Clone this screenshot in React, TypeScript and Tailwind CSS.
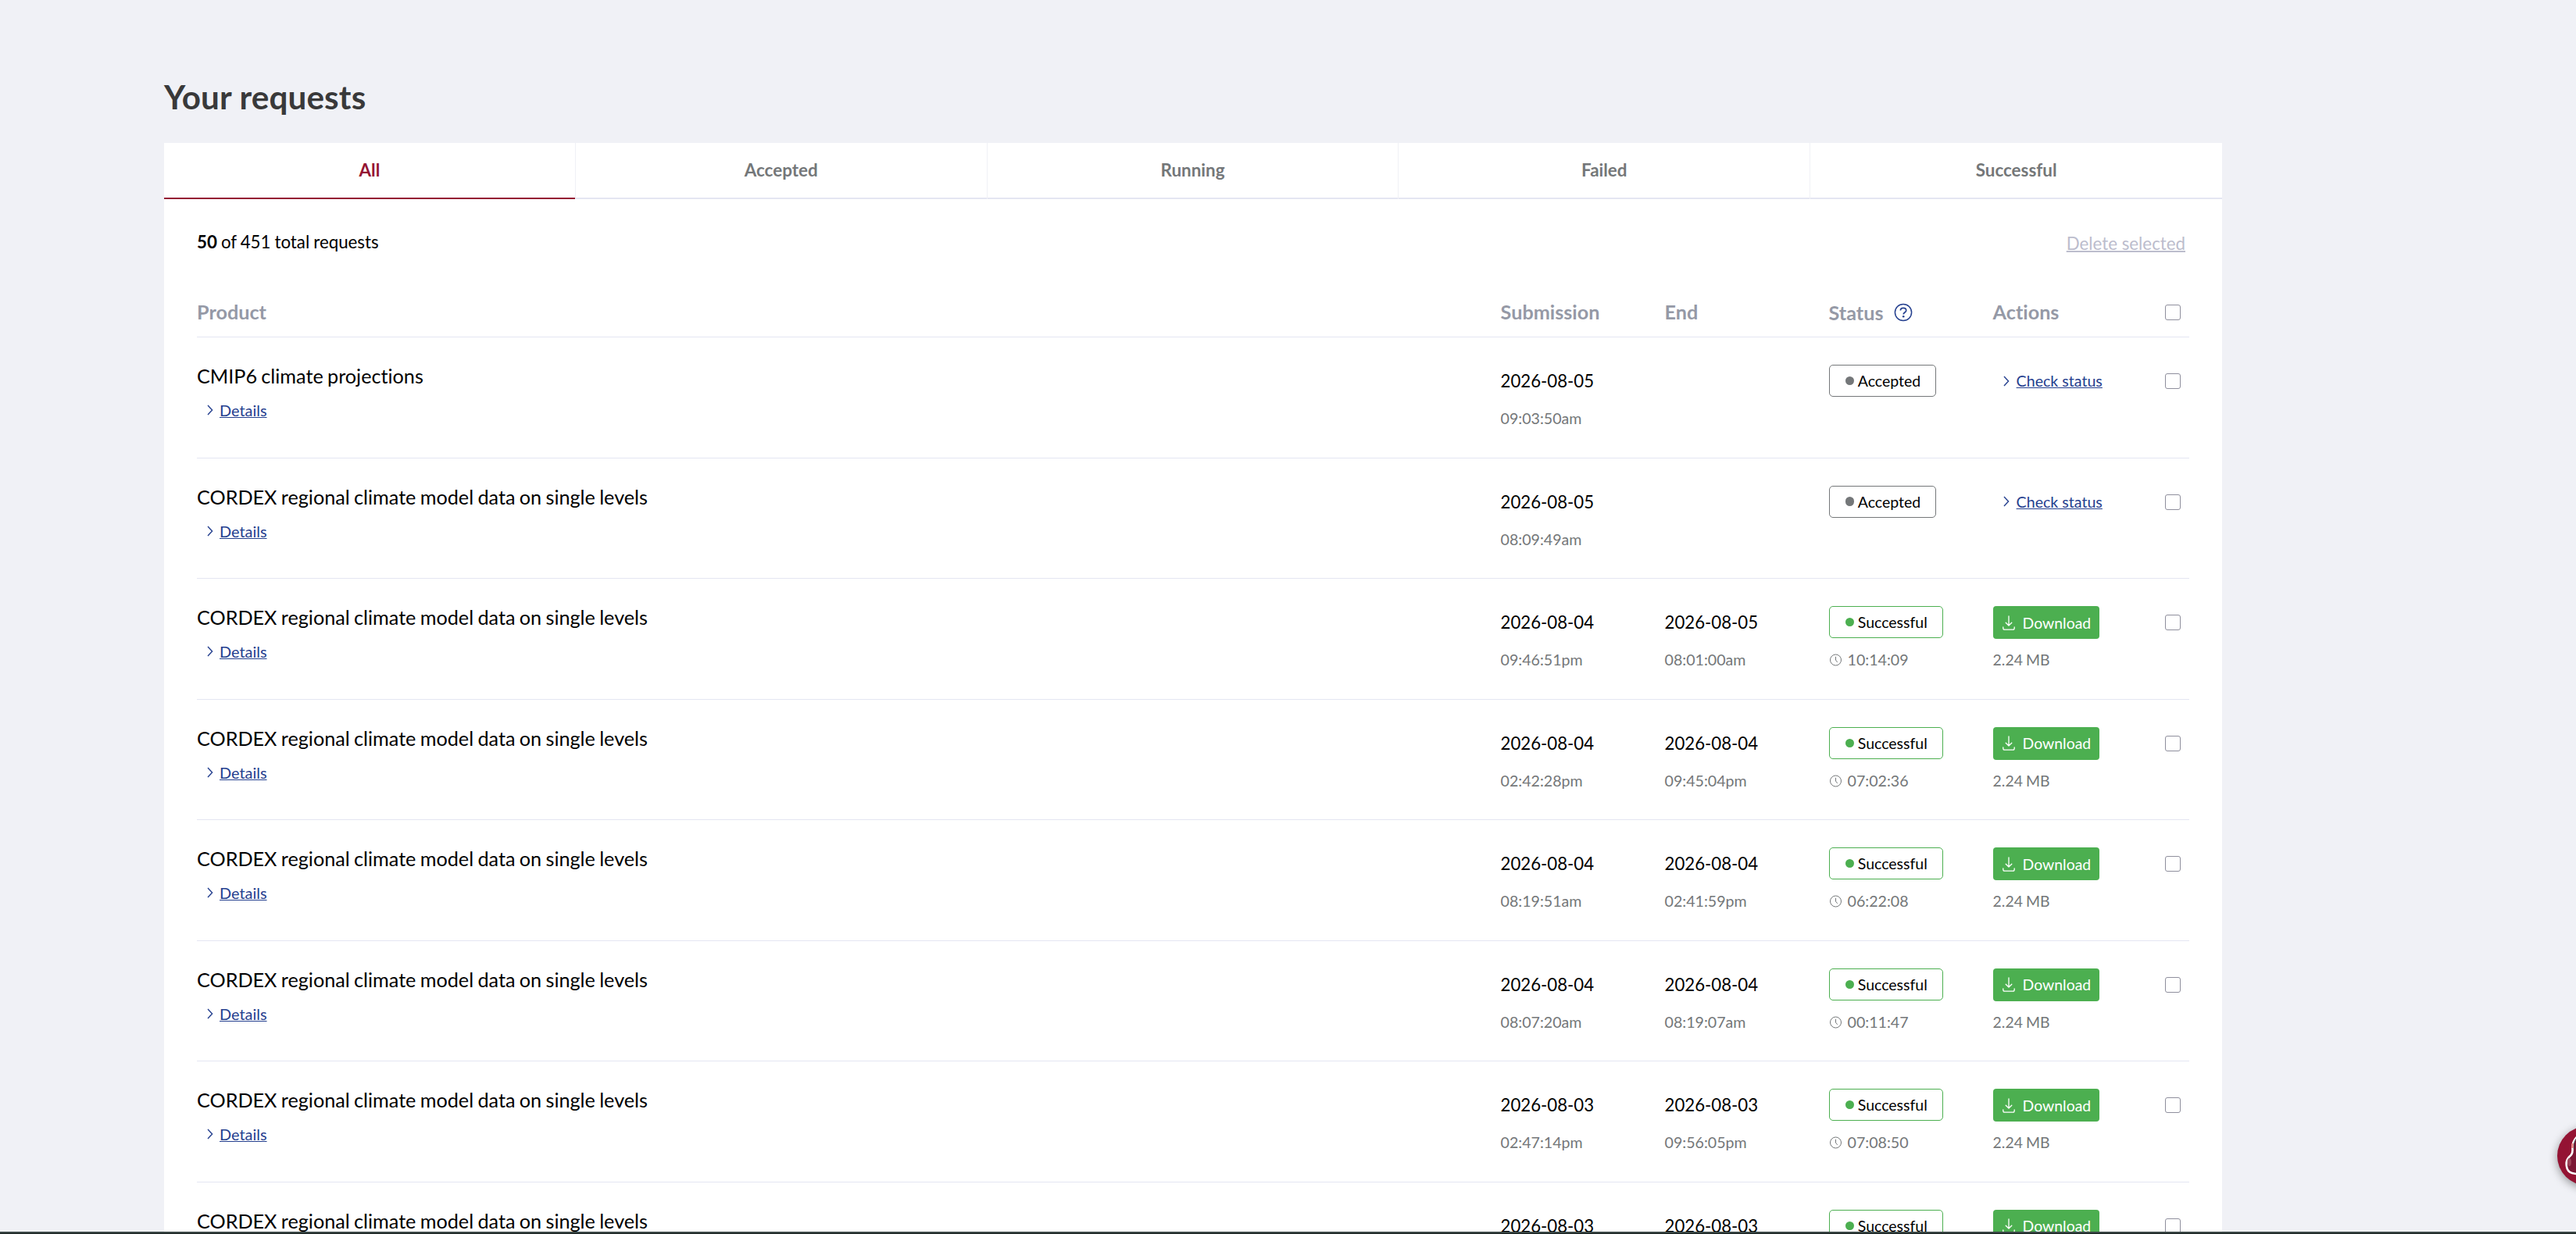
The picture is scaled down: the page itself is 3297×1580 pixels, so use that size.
type Request = {
  product: string;
  submitted: [string, string];
  ended?: [string, string];
  duration?: string;
};

const CORDEX = "CORDEX regional climate model data on single levels";

const requests: Request[] = [
  { product: "CMIP6 climate projections", submitted: ["2026-08-05", "09:03:50am"] },
  { product: CORDEX, submitted: ["2026-08-05", "08:09:49am"] },
  { product: CORDEX, submitted: ["2026-08-04", "09:46:51pm"], ended: ["2026-08-05", "08:01:00am"], duration: "10:14:09" },
  { product: CORDEX, submitted: ["2026-08-04", "02:42:28pm"], ended: ["2026-08-04", "09:45:04pm"], duration: "07:02:36" },
  { product: CORDEX, submitted: ["2026-08-04", "08:19:51am"], ended: ["2026-08-04", "02:41:59pm"], duration: "06:22:08" },
  { product: CORDEX, submitted: ["2026-08-04", "08:07:20am"], ended: ["2026-08-04", "08:19:07am"], duration: "00:11:47" },
  { product: CORDEX, submitted: ["2026-08-03", "02:47:14pm"], ended: ["2026-08-03", "09:56:05pm"], duration: "07:08:50" },
  { product: CORDEX, submitted: ["2026-08-03", ""], ended: ["2026-08-03", ""], duration: " " },
];

const tabs = ["All", "Accepted", "Running", "Failed", "Successful"];

function Chevron() {
  return (
    <svg className="h-[14px] w-[8px] shrink-0" viewBox="0 0 8 14" fill="none" stroke="#25408f" strokeWidth="1.4">
      <path d="M1 1l5.6 6L1 13" />
    </svg>
  );
}

function HelpIcon() {
  return (
    <svg className="h-6 w-6" viewBox="0 0 24 24" fill="none" stroke="#25408f" strokeWidth="1.5">
      <circle cx="12" cy="12" r="10.6" />
      <path d="M8.4 9.6c0-2 1.6-3.3 3.7-3.3s3.6 1.3 3.6 3.1c0 2.5-3.5 2.6-3.5 5" strokeWidth="1.7" />
      <circle cx="12.2" cy="17.2" r="1.3" fill="#25408f" stroke="none" />
    </svg>
  );
}

function ClockIcon() {
  return (
    <svg className="h-4 w-4 shrink-0" viewBox="0 0 16 16" fill="none" stroke="#747779" strokeWidth="1">
      <circle cx="8.5" cy="8" r="7" />
      <path d="M8.5 3.8v4.4l2.2 2.6" />
    </svg>
  );
}

function DownloadIcon() {
  return (
    <svg className="h-[19px] w-4 shrink-0" viewBox="0 0 16 19" fill="none" stroke="white" strokeWidth="1.3" strokeLinecap="round" strokeLinejoin="round">
      <path d="M8 .8v12M4.2 9.2L8 13l3.8-3.8M.8 14.8v1.4c0 1.2.7 1.9 1.9 1.9h10.6c1.2 0 1.9-.7 1.9-1.9v-1.4" />
    </svg>
  );
}

function Checkbox() {
  return <span className="block h-5 w-5 rounded-[3px] border border-[#8f8f9d] bg-white" />;
}

function DateCell({ value }: { value?: [string, string] }) {
  return (
    <div className="pt-[35px]">
      {value && (
        <>
          <div className="text-[22.2px] leading-[42px]">{value[0]}</div>
          <div className="mt-[13px] text-[19.6px] leading-[28px] text-[#747779]">{value[1]}</div>
        </>
      )}
    </div>
  );
}

function StatusBadge({ done }: { done: boolean }) {
  return (
    <div
      className={
        "flex h-[41px] w-fit items-center rounded-[5px] border pr-[19px] pl-[20px] text-[19.5px] leading-[23px] " +
        (done ? "border-[#4caf50]" : "border-[#747779]")
      }
    >
      <span className={"mr-[5px] size-[11.2px] rounded-full " + (done ? "bg-[#4caf50]" : "bg-[#747779]")} />
      {done ? "Successful" : "Accepted"}
    </div>
  );
}

function RequestRow({ request }: { request: Request }) {
  const done = Boolean(request.duration);
  return (
    <div className="grid h-[154.57px] grid-cols-[1fr_210px_210px_210px_210px_41.4px] border-b border-[#e4e6f2]">
      <div className="pt-[33px]">
        <div className="text-[25.2px] leading-[32px] [word-spacing:-1.1px]">{request.product}</div>
        <div className="mt-[14px] flex items-center pl-[13px] text-[19.9px] leading-[28px] text-[#25408f]">
          <Chevron />
          <span className="ml-2 underline underline-offset-[1px]">Details</span>
        </div>
      </div>
      <DateCell value={request.submitted} />
      <DateCell value={request.ended} />
      <div className="pt-[35px]">
        <StatusBadge done={done} />
        {request.duration?.trim() && (
          <div className="mt-[14px] flex items-center text-[19.6px] leading-[28px] text-[#747779]">
            <ClockIcon />
            <span className="ml-2">{request.duration}</span>
          </div>
        )}
      </div>
      <div className="pt-[35px]">
        {done ? (
          <>
            <div className="flex h-[42px] w-[136px] items-center rounded bg-[#4caf50] pl-[12px] text-[19.4px] leading-[23px] text-white">
              <DownloadIcon />
              <span className="ml-[10px]">Download</span>
            </div>
            {request.duration?.trim() && (
              <div className="mt-[13px] text-[19.4px] leading-[28px] text-[#747779] [word-spacing:-1px]">2.24 MB</div>
            )}
          </>
        ) : (
          <div className="flex h-[41px] items-center pl-[13px] text-[19.6px] text-[#25408f]">
            <Chevron />
            <span className="ml-[9px] leading-[23px] underline underline-offset-[1px]">Check status</span>
          </div>
        )}
      </div>
      <div className="pt-[46px] pl-[10.4px]">
        <Checkbox />
      </div>
    </div>
  );
}

export default function App() {
  return (
    <div className="relative h-[1580px] w-full overflow-hidden bg-[#f0f1f6] pl-[210px] font-[Lato,sans-serif] text-black [font-variant-ligatures:none]">
      <h1 className="pt-[99px] text-[42.2px] leading-[50px] font-bold tracking-[0.15px] text-[#39393a]">Your requests</h1>

      <div className="mt-[34px] w-[2634px] bg-white">
        <div className="grid h-[72px] grid-cols-5">
          {tabs.map((tab, i) => (
            <div key={tab} className={"flex " + (i < tabs.length - 1 ? "border-r border-[#f0f1f6]" : "")}>
              <div
                className={
                  "flex-1 border-b-2 pt-[21px] text-center text-[22.4px] leading-[27px] font-bold " +
                  (i === 0 ? "border-[#941333] text-[#941333]" : "border-[#e4e6f2] text-[#747779]")
                }
              >
                {tab}
              </div>
            </div>
          ))}
        </div>

        <div className="px-[42px]">
          <div className="flex justify-between pt-[41px] pr-[5px]">
            <div className="text-[22.3px] leading-[27px] [word-spacing:-0.7px]">
              <b>50</b> of 451 total requests
            </div>
            <div className="mt-[2px] text-[22.3px] leading-[27px] text-[#bcbdcd] underline underline-offset-[1px]">Delete selected</div>
          </div>

          <div className="mt-[56px] grid h-[51px] grid-cols-[1fr_210px_210px_210px_210px_41.4px] border-b border-[#e4e6f2] text-[25.2px] leading-[30px] font-bold text-[#9599a6]">
            <div className="pt-[3px]">Product</div>
            <div className="pt-[3px]">Submission</div>
            <div className="pt-[3px]">End</div>
            <div className="flex items-start">
              <span className="pt-1">Status</span>
              <span className="ml-[13px] pt-[7px]">
                <HelpIcon />
              </span>
            </div>
            <div className="pt-[3px]">Actions</div>
            <div className="pt-[9px] pl-[10.4px]">
              <Checkbox />
            </div>
          </div>

          {requests.map((request, i) => (
            <RequestRow key={i} request={request} />
          ))}
        </div>
      </div>

      {/* Floating chat launcher, partly beyond the right edge */}
      <div className="absolute top-[1442px] left-[3273px] size-[76px] overflow-hidden rounded-full bg-[#941333] shadow-[0_3px_12px_rgba(0,0,0,0.4)]">
        <svg className="size-full" viewBox="0 0 76 76" fill="none">
          <path
            d="M38 9C27 9 19 17 19.5 29C20 35 18 37 14.5 40C10 45 10.5 58 19 60C25 61.5 30 62 38 62Z"
            fill="#7b1735"
            stroke="white"
            strokeWidth="2.6"
          />
          <path d="M26 14c-4 4-5 8-4.5 15" stroke="#3c3c43" strokeWidth="1" />
          <path d="M19.5 22v6" stroke="#e98080" strokeWidth="2.5" />
          <ellipse cx="15.5" cy="46" rx="2.5" ry="5" fill="#9c4358" />
        </svg>
      </div>

      <div className="absolute bottom-0 left-0 h-[3px] w-full border-t-2 border-[#3a4745] bg-[#17211f]" />
    </div>
  );
}
